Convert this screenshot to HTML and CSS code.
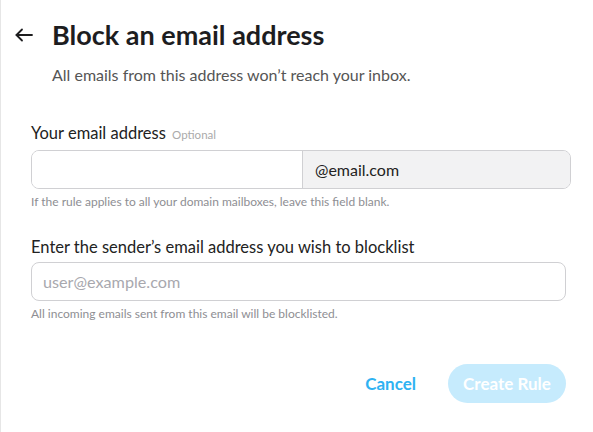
FILE: index.html
```html
<!DOCTYPE html>
<html lang="en">
<head>
    <meta charset="UTF-8">
    <meta name="viewport" content="width=device-width, initial-scale=1.0">
    <title>Block an email address</title>
    <link rel="stylesheet" href="styles.css">
</head>
<body>

<div class="modal">
    <div class="header">
        <button class="back" aria-label="Back">
            <svg width="18" height="14" viewBox="0 0 18 14" fill="none" stroke="#1d1d1f" stroke-width="1.8" stroke-linecap="round" stroke-linejoin="round">
                <path d="M17 7H1.5"/>
                <path d="M7 1.5L1.5 7L7 12.5"/>
            </svg>
        </button>
        <h1>Block an email address</h1>
    </div>
    <p class="subtitle">All emails from this address won’t reach your inbox.</p>

    <!-- Dirección propia -->
    <div class="field">
        <label for="ownEmail">Your email address <span class="optional">Optional</span></label>
        <div class="input-group">
            <input type="text" id="ownEmail" name="ownEmail">
            <div class="domain">@email.com</div>
        </div>
        <div class="hint">If the rule applies to all your domain mailboxes, leave this field blank.</div>
    </div>

    <!-- Remitente a bloquear -->
    <div class="field second">
        <label for="sender">Enter the sender’s email address you wish to blocklist</label>
        <input type="text" id="sender" name="sender" class="single" placeholder="user@example.com">
        <div class="hint">All incoming emails sent from this email will be blocklisted.</div>
    </div>

    <div class="actions">
        <button class="cancel">Cancel</button>
        <button class="create" disabled>Create Rule</button>
    </div>
</div>

</body>
</html>
```

FILE: styles.css
```css
/* Estilos principales */
body {
    font-family: Lato, "Noto Sans", sans-serif;
    margin: 0;
    padding: 0;
    background: #fff;
    color: #1d1d1f;
}
.modal {
    width: 593px;
    height: 432px;
    box-sizing: border-box;
    padding: 19px 22px 0 30px;
    border-left: 1px solid #e6e6e6;
}
.header {
    display: flex;
    align-items: center;
    margin-left: -16px;
}
.back {
    width: 22px;
    height: 30px;
    padding: 0;
    margin-right: 15px;
    border: none;
    background: none;
    display: flex;
    align-items: center;
    cursor: pointer;
}
h1 {
    margin: 0;
    font-size: 27px;
    font-weight: 700;
    line-height: 32px;
    color: #1d1d1f;
}
.subtitle {
    margin: 14px 0 0 21px;
    font-size: 16px;
    color: #555;
    line-height: 20px;
}
.field {
    margin-top: 38px;
}
.field.second {
    margin-top: 28px;
}
label {
    display: block;
    font-size: 16.5px;
    line-height: 20px;
    color: #222;
    margin-bottom: 5px;
}
.optional {
    font-size: 11.5px;
    color: #aaa;
    margin-left: 2px;
}
.input-group {
    display: flex;
    height: 39px;
    border: 1px solid #d0d0d3;
    border-radius: 8px;
    box-sizing: border-box;
    overflow: hidden;
}
.input-group input {
    width: 270px;
    box-sizing: border-box;
    border: none;
    padding: 0 12px;
    font-size: 16px;
    outline: none;
    font-family: inherit;
}
.domain {
    flex: 1;
    background: #f2f2f3;
    border-left: 1px solid #d0d0d3;
    display: flex;
    align-items: center;
    padding-left: 12px;
    font-size: 16px;
    color: #222;
}
.single {
    display: block;
    width: 535px;
    height: 39px;
    box-sizing: border-box;
    border: 1px solid #d0d0d3;
    border-radius: 8px;
    padding: 0 11px;
    font-size: 16.2px;
    font-family: inherit;
    outline: none;
}
.single::placeholder {
    color: #a8a8ae;
}
.hint {
    font-size: 12px;
    color: #8e8e93;
    margin-top: 6px;
    line-height: 14px;
}
.actions {
    display: flex;
    justify-content: flex-end;
    align-items: center;
    margin-top: 43px;
    margin-right: 5px;
}
.actions button {
    font-family: inherit;
    font-size: 17px;
    font-weight: 700;
    border: none;
    cursor: pointer;
}
.cancel {
    background: none;
    color: #2fb2f2;
    padding: 0;
    margin-right: 32px;
}
.create {
    background: #c6ebfd;
    color: #fff;
    height: 39px;
    width: 118px;
    border-radius: 20px;
}
```
